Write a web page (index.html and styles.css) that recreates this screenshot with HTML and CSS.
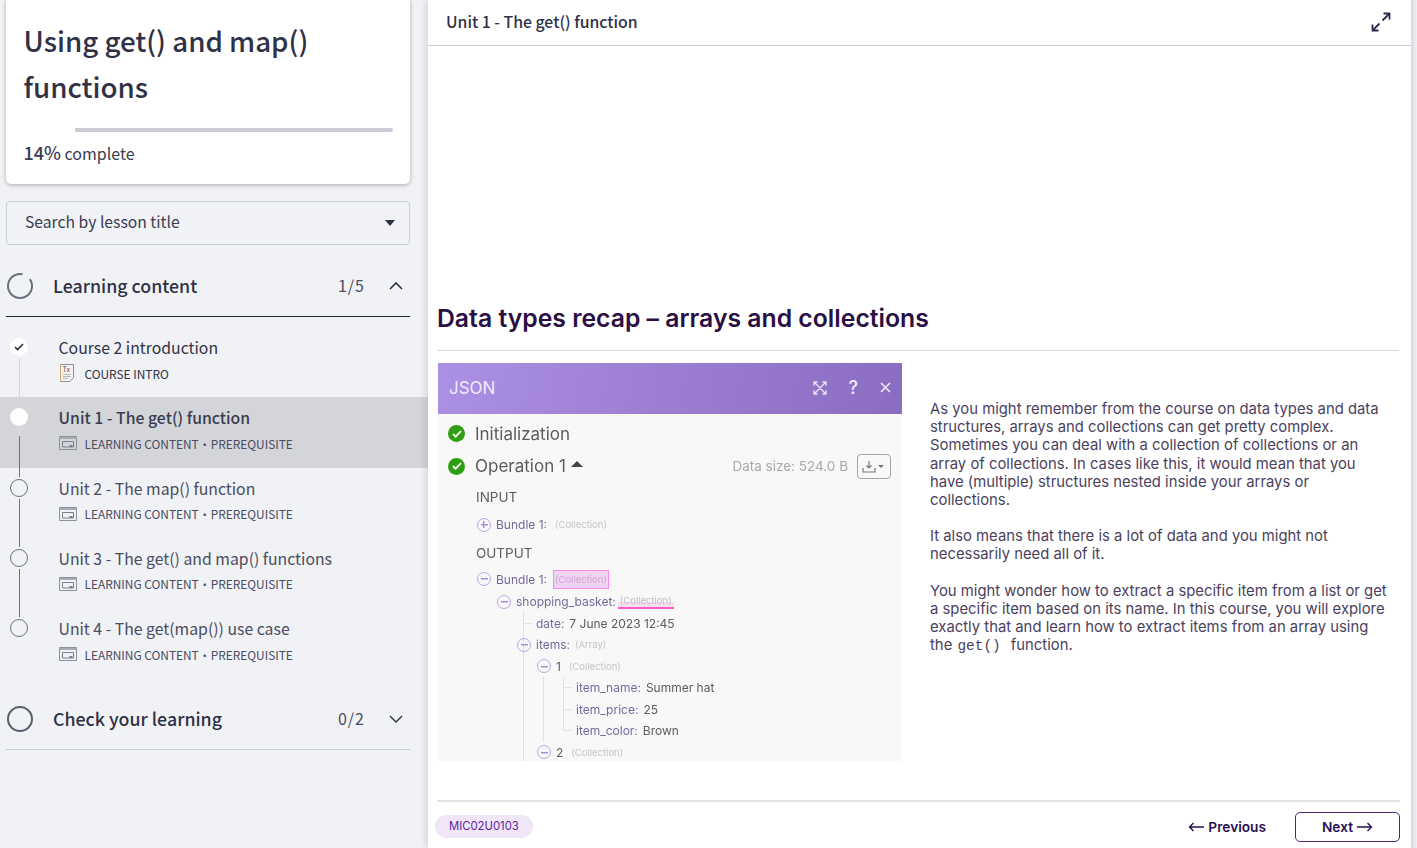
FILE: index.html
```html
<!DOCTYPE html>
<html lang="en">
<head>
    <meta charset="UTF-8">
    <meta name="viewport" content="width=device-width, initial-scale=1.0">
    <title>Using get() and map() functions</title>
    <link rel="stylesheet" href="styles.css">
</head>
<body>
    <div id="page">
        <aside id="sidebar">
            <div class="course-card">
                <h1>Using get() and map() functions</h1>
                <div class="progress"><div class="progress-done"></div></div>
                <p class="progress-text"><b>14%</b> complete</p>
            </div>
            <div class="lesson-search">
                <span>Search by lesson title</span>
                <i class="caret"></i>
            </div>

            <div class="group-head open">
                <svg class="ring" width="28" height="28" viewBox="0 0 28 28"><circle cx="14" cy="14" r="12" fill="none" stroke="#6d6f80" stroke-width="2" stroke-dasharray="66 9.400" transform="rotate(-35 14 14)"/></svg>
                <span class="group-title">Learning content</span>
                <span class="group-count">1/5</span>
                <svg class="chev" width="14" height="8" viewBox="0 0 14 8"><path d="M1 7l6-6 6 6" fill="none" stroke="#2f3147" stroke-width="1.6"/></svg>
            </div>

            <ul class="lessons">
                <li class="lesson done">
                    <div class="marker">
                        <span class="dot"><svg width="10" height="8" viewBox="0 0 10 8"><path d="M1 4l2.6 2.6L9 1" fill="none" stroke="#23243a" stroke-width="1.5"/></svg></span>
                        <span class="line"></span>
                    </div>
                    <div class="lesson-body">
                        <div class="lesson-title">Course 2 introduction</div>
                        <div class="lesson-meta">
                            <svg class="icon-doc" width="15" height="18" viewBox="0 0 15 18"><path d="M.5.500h13v13l-3.500 4H.5z" fill="#f6f3ee" stroke="#8b8d99"/><path d="M.5 1v16" stroke="#d9a36b"/><text x="2.500" y="7.500" font-size="7" fill="#4a4c60">Tx</text><path d="M3 10.500h8M3 12.500h8M3 14.500h5" stroke="#a5a7b3" stroke-width=".8"/></svg>
                            <span>COURSE INTRO</span>
                        </div>
                    </div>
                </li>
                <li class="lesson active">
                    <div class="marker">
                        <span class="dot"></span>
                        <span class="line"></span>
                    </div>
                    <div class="lesson-body">
                        <div class="lesson-title">Unit 1 - The get() function</div>
                        <div class="lesson-meta">
                            <svg width="18" height="14" viewBox="0 0 18 14"><use href="#icon-window"/></svg>
                            <span>LEARNING CONTENT<i class="sep">·</i>PREREQUISITE</span>
                        </div>
                    </div>
                </li>
                <li class="lesson">
                    <div class="marker">
                        <span class="dot"></span>
                        <span class="line"></span>
                    </div>
                    <div class="lesson-body">
                        <div class="lesson-title">Unit 2 - The map() function</div>
                        <div class="lesson-meta">
                            <svg width="18" height="14" viewBox="0 0 18 14"><use href="#icon-window"/></svg>
                            <span>LEARNING CONTENT<i class="sep">·</i>PREREQUISITE</span>
                        </div>
                    </div>
                </li>
                <li class="lesson">
                    <div class="marker">
                        <span class="dot"></span>
                        <span class="line"></span>
                    </div>
                    <div class="lesson-body">
                        <div class="lesson-title">Unit 3 - The get() and map() functions</div>
                        <div class="lesson-meta">
                            <svg width="18" height="14" viewBox="0 0 18 14"><use href="#icon-window"/></svg>
                            <span>LEARNING CONTENT<i class="sep">·</i>PREREQUISITE</span>
                        </div>
                    </div>
                </li>
                <li class="lesson last">
                    <div class="marker">
                        <span class="dot"></span>
                    </div>
                    <div class="lesson-body">
                        <div class="lesson-title">Unit 4 - The get(map()) use case</div>
                        <div class="lesson-meta">
                            <svg width="18" height="14" viewBox="0 0 18 14"><use href="#icon-window"/></svg>
                            <span>LEARNING CONTENT<i class="sep">·</i>PREREQUISITE</span>
                        </div>
                    </div>
                </li>
            </ul>

            <div class="group-head">
                <svg class="ring" width="28" height="28" viewBox="0 0 28 28"><circle cx="14" cy="14" r="12" fill="none" stroke="#5c5e70" stroke-width="2"/></svg>
                <span class="group-title">Check your learning</span>
                <span class="group-count">0/2</span>
                <svg class="chev" width="14" height="8" viewBox="0 0 14 8"><path d="M1 1l6 6 6-6" fill="none" stroke="#2f3147" stroke-width="1.4"/></svg>
            </div>
        </aside>

        <main id="main">
            <header class="topbar">
                <span>Unit 1 - The get() function</span>
                <svg width="20" height="20" viewBox="0 0 20 20"><path d="M11.500 8.500L18 2M12.500 1.500H18.500V7.500M8.500 11.500L2 18M1.500 12.500V18.500H7.500" fill="none" stroke="#2b2d4a" stroke-width="1.800"/></svg>
            </header>

            <div class="content">
                <h2>Data types recap – arrays and collections</h2>
                <div class="columns">
                    <div class="shot">
                        <div class="shot-head">
                            <span>JSON</span>
                            <div class="shot-tools">
                                <svg width="14" height="14" viewBox="0 0 15 15"><path d="M1 5V1h4M10 1h4v4M14 10v4h-4M5 14H1v-4M2 2l11 11M13 2L2 13" fill="none" stroke="#e6def5" stroke-width="1.500"/></svg>
                                <b>?</b>
                                <svg width="11" height="11" viewBox="0 0 11 11"><path d="M1 1l9 9M10 1l-9 9" stroke="#f0ebfa" stroke-width="1.600"/></svg>
                            </div>
                        </div>
                        <div class="shot-body">
                            <div class="op op-first"><i class="ok"><svg width="10" height="8" viewBox="0 0 10 8"><path d="M1 4l2.600 2.600L9 1" fill="none" stroke="#fff" stroke-width="1.800"/></svg></i>Initialization</div>
                            <div class="op">
                                <i class="ok"><svg width="10" height="8" viewBox="0 0 10 8"><path d="M1 4l2.600 2.600L9 1" fill="none" stroke="#fff" stroke-width="1.800"/></svg></i>Operation 1<i class="up"></i>
                                <span class="size">Data size: 524.0 B</span>
                                <span class="dl"><svg width="14" height="13" viewBox="0 0 14 13"><path d="M7 1v7M4.500 5.500L7 8l2.500-2.500M1 8v4h12V8" fill="none" stroke="#77777f" stroke-width="1.200"/></svg><i></i></span>
                            </div>
                            <div class="sect sect-input">INPUT</div>
                            <div class="node bundle-in"><i class="tog plus"></i><em>Bundle 1:</em><small>(Collection)</small></div>
                            <div class="sect sect-output">OUTPUT</div>
                            <div class="node lv0"><i class="tog"></i><em>Bundle 1:</em><small class="boxed">(Collection)</small></div>
                            <div class="node lv1"><i class="tog"></i><em>shopping_basket:</em><small class="under">(Collection)</small></div>
                            <div class="node lv2"><em>date:</em>7 June 2023 12:45</div>
                            <div class="node lv1b"><i class="tog"></i><em>items:</em><small>(Array)</small></div>
                            <div class="node lv2b"><i class="tog"></i>1<small>(Collection)</small></div>
                            <div class="node lv3"><em>item_name:</em>Summer hat</div>
                            <div class="node lv3"><em>item_price:</em>25</div>
                            <div class="node lv3 lv3-end"><em>item_color:</em>Brown</div>
                            <div class="node lv2b"><i class="tog"></i>2<small>(Collection)</small></div>
                        </div>
                    </div>
                    <div class="copy">
                        <p>As you might remember from the course on data types and data structures, arrays and collections can get pretty complex. Sometimes you can deal with a collection of collections or an array of collections. In cases like this, it would mean that you have (multiple) structures nested inside your arrays or collections.</p>
                        <p>It also means that there is a lot of data and you might not necessarily need all of it.</p>
                        <p>You might wonder how to extract a specific item from a list or get a specific item based on its name. In this course, you will explore exactly that and learn how to extract items from an array using the <code>get()</code> function.</p>
                    </div>
                </div>
            </div>

            <footer class="bottom">
                <span class="code-badge">MIC02U0103</span>
                <div class="nav-btns">
                    <a class="btn-prev">
                        <svg width="16" height="10" viewBox="0 0 16 10"><path d="M16 5H1.500M5.500 1L1.500 5l4 4" fill="none" stroke="#2a0f55" stroke-width="1.400"/></svg>
                        Previous
                    </a>
                    <a class="btn-next">
                        Next
                        <svg width="16" height="10" viewBox="0 0 16 10"><path d="M0 5h14.500M10.500 1l4 4-4 4" fill="none" stroke="#2a0f55" stroke-width="1.400"/></svg>
                    </a>
                </div>
            </footer>
        </main>
        <div id="edge"></div>
    </div>

    <svg width="0" height="0" class="defs">
        <symbol id="icon-window" viewBox="0 0 18 14">
            <path d="M.5.500h17v13H.5z" fill="none" stroke="#8d8f9b"/>
            <path d="M.5 1h17v2H.5z" fill="#a9abb5"/>
            <path d="M3.500 5.500h11v5.500h-11z" fill="none" stroke="#7d7f8c"/>
            <path d="M10.500 9h3v2h-3z" fill="#7d7f8c"/>
        </symbol>
    </svg>
</body>
</html>
```

FILE: styles.css
```css
* {
    box-sizing: border-box;
}
html, body {
    margin: 0;
    padding: 0;
    height: 100%;
    overflow: hidden;
}
body {
    font-family: "Noto Sans CJK SC", "Noto Sans", sans-serif;
    background-color: #F1F2F5;
    color: #2F3147;
}
#page {
    display: flex;
    height: 848px;
}
.defs {
    position: absolute;
}

/* sidebar */
#sidebar {
    width: 428px;
    flex: none;
}
.course-card {
    margin: 0 18px 0 6px;
    height: 184px;
    padding: 17px 17px 0 17.500px;
    background: #FFFFFF;
    border-radius: 0 0 5px 5px;
    box-shadow: 0 1px 4px rgba(0, 0, 0, 0.3);
}
.course-card h1 {
    margin: 0;
    font-size: 27.700px;
    font-weight: 500;
    line-height: 46px;
    color: #2F3147;
}
.progress {
    margin-top: 19px;
    height: 4px;
    border-radius: 2px;
    background: #C9CBD6;
}
.progress-done {
    width: 14%;
    height: 4px;
    background: #FFFFFF;
}
.progress-text {
    margin: 9px 0 0;
    font-size: 16px;
    line-height: 22px;
    color: #3A3C50;
}
.progress-text b {
    font-size: 18px;
    font-weight: 500;
}
.lesson-search {
    display: flex;
    justify-content: space-between;
    align-items: center;
    margin: 17px 18px 0 6px;
    height: 44px;
    padding: 0 14px 3px 18px;
    border: 1px solid #C9CBD6;
    border-radius: 4px;
    font-size: 15.700px;
    color: #3A3C50;
}
.caret {
    width: 0;
    height: 0;
    margin-top: 3px;
    border-left: 5px solid transparent;
    border-right: 5px solid transparent;
    border-top: 6px solid #2F3147;
}
.group-head {
    display: flex;
    align-items: center;
    margin: 11px 18px 0 6px;
    height: 61px;
    border-bottom: 1px solid #C9CBD6;
}
.group-head.open {
    border-bottom-color: #23243A;
}
.ring {
    flex: none;
}
.group-title {
    flex: 1;
    margin-left: 19px;
    padding-bottom: 3px;
    font-size: 17.800px;
    font-weight: 500;
}
.group-count {
    margin-right: 24px;
    padding-bottom: 3px;
    font-size: 16px;
    letter-spacing: 1px;
    color: #4A4C60;
}
.chev {
    margin-right: 7px;
}

/* lesson list */
.lessons {
    list-style: none;
    margin: 10px 0 11px;
    padding: 0;
}
.lesson {
    display: flex;
    height: 70.300px;
}
.lesson.active {
    background: #D4D5D9;
}
.marker {
    display: flex;
    flex-direction: column;
    align-items: center;
    width: 38px;
    flex: none;
    padding-top: 11px;
}
.dot {
    display: flex;
    align-items: center;
    justify-content: center;
    width: 18px;
    height: 18px;
    flex: none;
    border-radius: 50%;
    border: 1px solid #6D6F80;
}
.done .dot, .active .dot {
    background: #FFFFFF;
    border-color: #FFFFFF;
}
.line {
    flex: 1;
    width: 1px;
    margin: 2px 0 -9px;
    background: #6D6F80;
    position: relative;
    z-index: 1;
}
.done .line {
    background: #D5D6DB;
}
.active .line {
    background: linear-gradient(#E3E3E7 8px, #6D6F80 8px);
}
.lesson-body {
    margin-left: 20.500px;
    padding-top: 9px;
    color: #4A4C60;
}
.lesson-title {
    font-size: 15.800px;
    line-height: 24px;
}
.active .lesson-title {
    font-weight: 500;
    color: #3A3C50;
}
.done .lesson-title {
    color: #2F3147;
}
.lesson-meta {
    display: flex;
    align-items: center;
    height: 20px;
    margin-top: 3px;
    font-size: 11.900px;
    color: #4A4C60;
}
.lesson-meta svg {
    margin-right: 8px;
    flex: none;
}
.done .lesson-meta span {
    color: #2F3147;
}
.lesson-meta svg.icon-doc {
    margin: 0 10px 0 1px;
}
.sep {
    font-style: normal;
}

/* main panel */
#main {
    width: 983px;
    flex: none;
    display: flex;
    flex-direction: column;
    background: #FFFFFF;
    box-shadow: -3px 0 6px rgba(0, 0, 0, 0.1);
    position: relative;
}
#edge {
    flex: 1;
    background: linear-gradient(90deg, #DADADD, #F1F2F5);
}
.topbar {
    display: flex;
    justify-content: space-between;
    align-items: center;
    height: 46px;
    padding: 0 20px 2px 18px;
    border-bottom: 1px solid #C9CBD6;
    font-size: 15.800px;
    font-weight: 500;
    color: #2F3147;
}
.content {
    flex: 1;
    padding: 255px 12px 0 9px;
}
.content h2 {
    margin: 0;
    height: 50px;
    padding-bottom: 1px;
    border-bottom: 1px solid #D9D9DC;
    font-family: Inter, sans-serif;
    font-size: 24.750px;
    font-weight: 600;
    line-height: 35px;
    color: #2A0F45;
}
.columns {
    display: flex;
    padding: 12px 0 0 1px;
}
.copy {
    margin-left: 28px;
    width: 460px;
    padding-top: 37px;
    font-family: Inter, sans-serif;
    font-size: 14.850px;
    line-height: 18.200px;
    color: #4A4160;
}
.copy p {
    margin: 0 0 18px;
}
.copy code {
    font-family: "Liberation Mono", monospace;
    font-size: 14.400px;
    line-height: 1;
    margin: 0 6px 0 1px;
}

/* lesson screenshot */
.shot {
    width: 464px;
    height: 398px;
    flex: none;
    overflow: hidden;
    background: #F8F8F8;
    font-family: Inter, sans-serif;
    color: #555;
}
.shot-head {
    display: flex;
    justify-content: space-between;
    align-items: center;
    height: 51px;
    padding: 0 11px 2px 11px;
    background: linear-gradient(100deg, #AC90E6, #8A6CC2);
    color: #F0EBFA;
    font-size: 17px;
}
.shot-tools {
    display: flex;
    align-items: center;
    gap: 22px;
}
.shot-tools b {
    font-weight: 500;
    font-size: 18px;
}
.shot-body {
    padding: 3px 11px 0 10px;
    filter: blur(0.35px);
}
.op {
    display: flex;
    align-items: center;
    height: 32px;
    font-size: 17px;
    color: #5C5C5C;
}
.op-first {
    height: 33px;
}
.ok {
    display: flex;
    align-items: center;
    justify-content: center;
    width: 17px;
    height: 17px;
    margin-right: 10px;
    border-radius: 50%;
    background: #2F9E12;
}
.up {
    width: 0;
    height: 0;
    margin: 0 auto 4px 5px;
    border-left: 6px solid transparent;
    border-right: 6px solid transparent;
    border-bottom: 6px solid #444;
}
.size {
    font-size: 13.500px;
    color: #A8A8A8;
}
.dl {
    display: flex;
    align-items: center;
    gap: 2px;
    width: 34px;
    height: 25px;
    margin-left: 9px;
    padding-left: 4px;
    border: 1px solid #A3A3A8;
    border-radius: 4px;
}
.dl i {
    border-left: 3px solid transparent;
    border-right: 3px solid transparent;
    border-top: 3px solid #77777F;
}
.sect {
    padding-left: 28px;
    font-size: 13.500px;
    line-height: 20px;
    color: #5C5C5C;
}
.sect-input {
    margin-top: 5px;
}
.sect-output {
    margin: 5px 0 4px;
}
.node {
    display: flex;
    align-items: center;
    height: 21.500px;
    font-size: 12px;
    color: #5C5C5C;
}
.node em {
    font-style: normal;
    color: #76699A;
    margin-right: 5px;
}
.node small {
    font-size: 9.500px;
    color: #C4C4C4;
}
.tog {
    width: 14px;
    height: 14px;
    margin-right: 5px;
    flex: none;
    border: 1.500px solid #B9A4E4;
    border-radius: 50%;
    background: linear-gradient(#A58FD6, #A58FD6) center / 7px 1.500px no-repeat;
}
.tog.plus {
    background:
        linear-gradient(#A58FD6, #A58FD6) center / 7px 1.500px no-repeat,
        linear-gradient(#A58FD6, #A58FD6) center / 1.500px 7px no-repeat;
}
.bundle-in {
    height: 27px;
    margin-top: 4px;
    padding-left: 29px;
}
.bundle-in small {
    margin-left: 3px;
}
.lv0 {
    height: 24px;
    padding-left: 29px;
}
.lv1 {
    height: 21px;
    padding-left: 49px;
}
.lv1b {
    padding-left: 69px;
}
.lv2 {
    height: 22px;
    padding-left: 88px;
    background:
        linear-gradient(#E0E0E0, #E0E0E0) 75px 50% / 8px 1px no-repeat,
        linear-gradient(#E0E0E0, #E0E0E0) 75px 0 / 1px 100% no-repeat;
}
.lv1b {
    background: linear-gradient(#E0E0E0, #E0E0E0) 75px 0 / 1px 100% no-repeat;
}
.lv2b {
    padding-left: 89px;
    background: linear-gradient(#E0E0E0, #E0E0E0) 75px 0 / 1px 100% no-repeat;
}
.lv3 {
    padding-left: 128px;
    background:
        linear-gradient(#E0E0E0, #E0E0E0) 115px 50% / 8px 1px no-repeat,
        linear-gradient(#E0E0E0, #E0E0E0) 115px 0 / 1px 100% no-repeat,
        linear-gradient(#E0E0E0, #E0E0E0) 95px 0 / 1px 100% no-repeat,
        linear-gradient(#E0E0E0, #E0E0E0) 75px 0 / 1px 100% no-repeat;
}
.lv3-end {
    background:
        linear-gradient(#E0E0E0, #E0E0E0) 115px 50% / 8px 1px no-repeat,
        linear-gradient(#E0E0E0, #E0E0E0) 115px 0 / 1px 50% no-repeat,
        linear-gradient(#E0E0E0, #E0E0E0) 95px 0 / 1px 100% no-repeat,
        linear-gradient(#E0E0E0, #E0E0E0) 75px 0 / 1px 100% no-repeat;
}
.boxed {
    margin-left: 1px;
    padding: 3px 1px;
    background: #F0D4F2;
    border: 1px solid #F78AF0;
    color: #C9A8D0 !important;
}
.under {
    margin-left: -3px;
    padding: 0 2px 1px;
    border-bottom: 2px solid #FA5CC8;
    background: linear-gradient(transparent 55%, #F5E0EE 55%);
    color: #C4B8C8 !important;
}
.lv2b small {
    margin-left: 8px;
}

/* footer */
.bottom {
    display: flex;
    justify-content: space-between;
    align-items: center;
    height: 48px;
    margin: 0 11px 0 9px;
    padding-top: 4px;
    border-top: 2px solid #E4E2E4;
}
.code-badge {
    margin: 0 0 2px -2px;
    padding: 0 14px;
    height: 23px;
    line-height: 23px;
    border-radius: 12px;
    background: #F0E6F8;
    font-family: Inter, sans-serif;
    font-size: 11.300px;
    color: #5B1FA0;
}
.nav-btns {
    display: flex;
    align-items: center;
    gap: 29px;
    font-family: Inter, sans-serif;
    font-size: 13.700px;
    font-weight: 600;
    color: #2A0F55;
}
.btn-prev, .btn-next {
    display: flex;
    align-items: center;
    gap: 4px;
}
.btn-next {
    justify-content: center;
    width: 105px;
    height: 30px;
    border: 1.500px solid #4A2A78;
    border-radius: 5px;
}
```
